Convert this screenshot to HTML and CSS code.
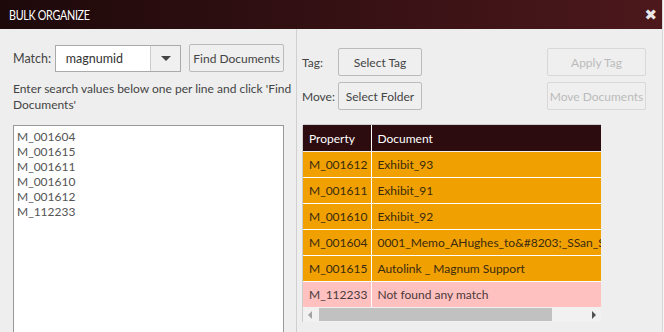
FILE: index.html
```html
<!DOCTYPE html>
<html lang="en">
<head>
  <meta charset="UTF-8" />
  <title>Bulk Organize</title>
  <link rel="stylesheet" href="styles.css">
</head>
<body>
  <div class="dialog">
    <div class="titlebar">
      <span class="title">BULK ORGANIZE</span>
      <span class="close">&#10006;</span>
    </div>
    <div class="content">
      <div class="left">
        <div class="match-row">
          <label class="match-label">Match:</label>
          <div class="select">
            <span class="select-value">magnumid</span>
            <span class="select-arrow"></span>
          </div>
          <button class="btn find">Find Documents</button>
        </div>
        <p class="hint">Enter search values below one per line and click 'Find Documents'</p>
        <div class="values">M_001604
M_001615
M_001611
M_001610
M_001612
M_112233</div>
      </div>
      <div class="right">
        <div class="actions">
          <span class="act-label">Tag:</span>
          <button class="btn">Select Tag</button>
          <span></span>
          <button class="btn disabled">Apply Tag</button>
          <span class="act-label">Move:</span>
          <button class="btn">Select Folder</button>
          <span></span>
          <button class="btn disabled">Move Documents</button>
        </div>
        <div class="results">
          <div class="table-wrap">
            <table>
              <thead>
                <tr><th class="c1">Property</th><th>Document</th></tr>
              </thead>
              <tbody>
                <tr class="found"><td class="c1">M_001612</td><td>Exhibit_93</td></tr>
                <tr class="found"><td class="c1">M_001611</td><td>Exhibit_91</td></tr>
                <tr class="found"><td class="c1">M_001610</td><td>Exhibit_92</td></tr>
                <tr class="found"><td class="c1">M_001604</td><td>0001_Memo_AHughes_to&amp;#8203;_SSan_Support_Request</td></tr>
                <tr class="found"><td class="c1">M_001615</td><td>Autolink _ Magnum Support</td></tr>
                <tr class="missing"><td class="c1">M_112233</td><td>Not found any match</td></tr>
              </tbody>
            </table>
          </div>
          <div class="hscroll">
            <span class="arrow left-arrow"></span>
            <span class="track"><span class="thumb"></span></span>
            <span class="arrow right-arrow"></span>
          </div>
        </div>
      </div>
    </div>
  </div>
</body>
</html>
```

FILE: styles.css
```css
body {
  margin: 0;
  background: #f6f6f6;
  font-family: Lato, "Open Sans", sans-serif;
  font-size: 12px;
  color: #333;
}
.dialog {
  width: 662px;
  height: 332px;
  background: #eeeeee;
  border-right: 1px solid #d8d8d8;
  overflow: hidden;
}
.titlebar {
  height: 29px;
  background: linear-gradient(to right, #1d090a, #4c181c);
  display: flex;
  align-items: center;
  justify-content: space-between;
  padding: 0 5px 0 9px;
}
.title {
  color: #fff;
  font-size: 14px;
  letter-spacing: -0.4px;
  transform: scaleX(0.77);
  transform-origin: left center;
}
.close {
  color: #e8e8e8;
  font-size: 15px;
  font-weight: bold;
  font-family: "DejaVu Sans", sans-serif;
}
.content {
  display: flex;
  height: 303px;
}
.left {
  width: 271px;
  padding: 15px 12px 0 13px;
}
.match-row {
  display: flex;
  align-items: center;
  height: 28px;
}
.match-label {
  color: #444;
  font-size: 12.5px;
  width: 42px;
}
.select {
  display: flex;
  width: 125px;
  height: 25px;
  background: #fff;
  border: 1px solid #aaa;
}
.select-value {
  flex: 1;
  padding-left: 10px;
  line-height: 25px;
  font-size: 12.5px;
  color: #333;
}
.select-arrow {
  width: 29px;
  background: #f0f0f0;
  border-left: 1px solid #ccc;
  position: relative;
}
.select-arrow::after {
  content: "";
  position: absolute;
  left: 10px;
  top: 10px;
  border-left: 5px solid transparent;
  border-right: 5px solid transparent;
  border-top: 5px solid #444;
}
.btn {
  height: 28px;
  background: #efefef;
  border: 1px solid #bbb;
  border-radius: 2px;
  font-family: Lato, "Open Sans", sans-serif;
  font-size: 12px;
  color: #444;
  padding: 0;
  white-space: nowrap;
}
.find {
  width: 95px;
  margin-left: 8px;
}
.hint {
  margin: 9px -10px 0 0;
  line-height: 16px;
  font-size: 12px;
  color: #444;
}
.values {
  margin-top: 12px;
  height: 220px;
  background: #fff;
  border: 1px solid #999;
  padding: 3px 3px 2px;
  white-space: pre;
  line-height: 15px;
  font-size: 12px;
  color: #555;
}
.right {
  flex: 1;
  border-left: 1px solid #d0d0d0;
  padding: 19px 16px 0 5px;
}
.actions {
  display: grid;
  grid-template-columns: 36px 84px 1fr 99px;
  grid-auto-rows: 28px;
  row-gap: 6px;
  align-items: center;
}
.act-label {
  font-size: 12px;
  color: #444;
}
.btn.disabled {
  border-color: #d8d8d8;
  color: #bbb;
}
.results {
  width: 298px;
  margin-top: 14px;
  border: 1px solid #ccc;
  border-right: none;
  border-bottom: none;
  border-radius: 3px 0 0 0;
}
.table-wrap {
  overflow: hidden;
}
table {
  border-collapse: collapse;
  white-space: nowrap;
}
th, td {
  height: 25px;
  padding: 0 6px;
  text-align: left;
  border-right: 1px solid #fff;
  border-bottom: 1px solid #fff;
  font-size: 12px;
}
th {
  height: 26px;
  background: #2c0c0e;
  color: #fff;
  font-weight: normal;
  border-bottom-color: #eee;
}
th.c1, td.c1 {
  width: 52px;
  padding-right: 4px;
}
th:last-child, td:last-child {
  padding-left: 5px;
  padding-right: 40px;
}
.found td {
  background: #f0a000;
  color: #3a2a10;
}
.missing td {
  background: #ffc0c0;
  color: #4a3a3a;
  border-bottom: none;
}
.hscroll {
  display: flex;
  align-items: center;
  height: 15px;
  background: #f1f1f1;
}
.arrow {
  width: 15px;
  height: 15px;
  position: relative;
}
.left-arrow::after {
  content: "";
  position: absolute;
  left: 5px;
  top: 4px;
  border-top: 4px solid transparent;
  border-bottom: 4px solid transparent;
  border-right: 4px solid #a3a3a3;
}
.right-arrow::after {
  content: "";
  position: absolute;
  left: 6px;
  top: 4px;
  border-top: 4px solid transparent;
  border-bottom: 4px solid transparent;
  border-left: 4px solid #505050;
}
.track {
  flex: 1;
  height: 15px;
  display: flex;
  align-items: center;
}
.thumb {
  margin-left: 1px;
  width: 233px;
  height: 13px;
  background: #c1c1c1;
}
```
